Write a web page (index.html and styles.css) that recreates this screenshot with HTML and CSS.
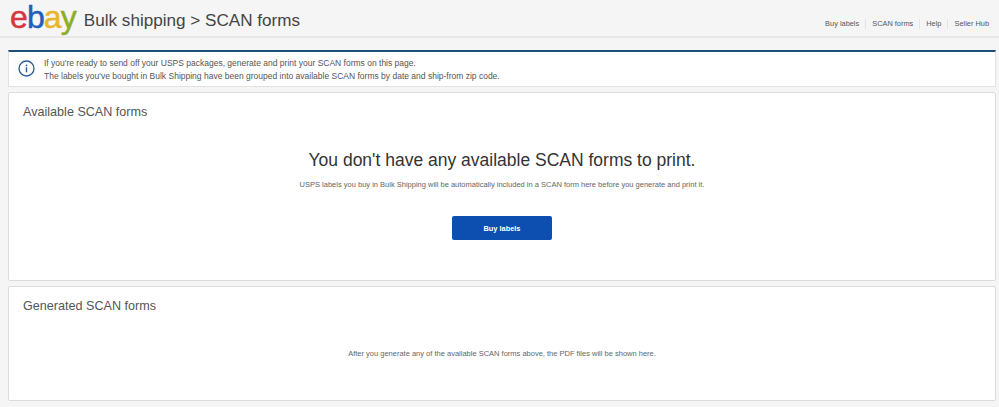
FILE: index.html
```html
<!DOCTYPE html>
<html lang="en">
<head>
    <meta charset="UTF-8">
    <meta name="viewport" content="width=device-width, initial-scale=1.0">
    <title>Bulk shipping &gt; SCAN forms</title>
    <link rel="stylesheet" href="styles.css">
</head>
<body>

<header class="top-bar">
    <div class="brand">
        <span class="logo"><span class="logo-e">e</span><span class="logo-b">b</span><span class="logo-a">a</span><span class="logo-y">y</span></span>
        <h1>Bulk shipping &gt; SCAN forms</h1>
    </div>
    <nav class="top-nav">
        <a href="#">Buy labels</a>
        <a href="#">SCAN forms</a>
        <a href="#">Help</a>
        <a href="#">Seller Hub</a>
    </nav>
</header>

<main class="content">
    <div class="notice">
        <svg class="notice-icon" width="17" height="17" viewBox="0 0 17 17" fill="none">
            <circle cx="8.5" cy="8.5" r="7.5" stroke="#2a5a98" stroke-width="1.3"/>
            <rect x="7.8" y="7.3" width="1.4" height="5" fill="#2a5a98"/>
            <rect x="7.8" y="4.6" width="1.4" height="1.5" fill="#2a5a98"/>
        </svg>
        <p>If you're ready to send off your USPS packages, generate and print your SCAN forms on this page.<br>
        The labels you've bought in Bulk Shipping have been grouped into available SCAN forms by date and ship-from zip code.</p>
    </div>

    <section class="card card-available">
        <h2>Available SCAN forms</h2>
        <div class="empty">
            <h3>You don't have any available SCAN forms to print.</h3>
            <p>USPS labels you buy in Bulk Shipping will be automatically included in a SCAN form here before you generate and print it.</p>
            <button>Buy labels</button>
        </div>
    </section>

    <section class="card card-generated">
        <h2>Generated SCAN forms</h2>
        <p class="generated-text">After you generate any of the available SCAN forms above, the PDF files will be shown here.</p>
    </section>
</main>

</body>
</html>
```

FILE: styles.css
```css
* {
    box-sizing: border-box;
    margin: 0;
    padding: 0;
}
html, body {
    height: 407px;
    overflow: hidden;
}
body {
    font-family: 'Liberation Sans', Arial, sans-serif;
    background-color: #f5f5f5;
    color: #333;
}
.top-bar {
    display: flex;
    justify-content: space-between;
    height: 38px;
    padding: 0 10px 0 10px;
    border-bottom: 2px solid #e8e8e8;
}
.brand {
    display: flex;
    align-items: center;
    gap: 8px;
}
.logo {
    font-size: 32px;
    line-height: 38px;
    letter-spacing: -0.9px;
    margin-top: -2px;
    -webkit-text-stroke: 0.5px;
}
.logo-e { color: #d4383e; }
.logo-b { color: #1f60b8; }
.logo-a { color: #e8b52e; }
.logo-y { color: #8fad24; }
h1 {
    font-size: 17.1px;
    font-weight: normal;
    color: #444;
    margin-top: 5px;
}
.top-nav {
    display: flex;
    align-items: flex-start;
    padding-top: 19px;
    font-size: 7.4px;
}
.top-nav a {
    color: #555;
    text-decoration: none;
    line-height: 10px;
    padding: 0 6px;
    border-right: 1px solid #e4e4e4;
}
.top-nav a:last-child {
    border-right: none;
    padding-right: 0;
}
.content {
    padding: 12px 3px 0 8px;
}
.notice {
    display: flex;
    align-items: center;
    gap: 9px;
    height: 37px;
    padding-left: 9px;
    background-color: #fff;
    border: 1px solid #e2e2e2;
    border-top: 2px solid #1f4e79;
}
.notice-icon {
    margin-top: -1px;
}
.notice p {
    font-size: 8.5px;
    line-height: 13px;
    color: #555;
    margin-top: 1px;
}
.card {
    background-color: #fff;
    border: 1px solid #dcdcdc;
    border-radius: 2px;
    padding: 11px 14px;
}
.card-available {
    height: 189px;
    margin-top: 5px;
}
.card-generated {
    height: 115px;
    margin-top: 5px;
}
h2 {
    font-size: 12.6px;
    font-weight: normal;
    line-height: 16px;
    color: #555;
}
.empty {
    text-align: center;
    padding-top: 30px;
}
h3 {
    font-size: 17.5px;
    font-weight: normal;
    line-height: 21px;
    color: #333;
}
.empty p {
    font-size: 7.5px;
    line-height: 10px;
    color: #666;
    margin-top: 9px;
}
button {
    display: block;
    width: 100px;
    height: 24px;
    margin: 26px auto 0;
    background-color: #0d4fb0;
    color: #fff;
    font-family: inherit;
    font-size: 7.4px;
    font-weight: bold;
    border: none;
    border-radius: 2px;
    cursor: pointer;
}
.generated-text {
    font-size: 7.5px;
    line-height: 10px;
    color: #666;
    text-align: center;
    margin-top: 35px;
}
```
